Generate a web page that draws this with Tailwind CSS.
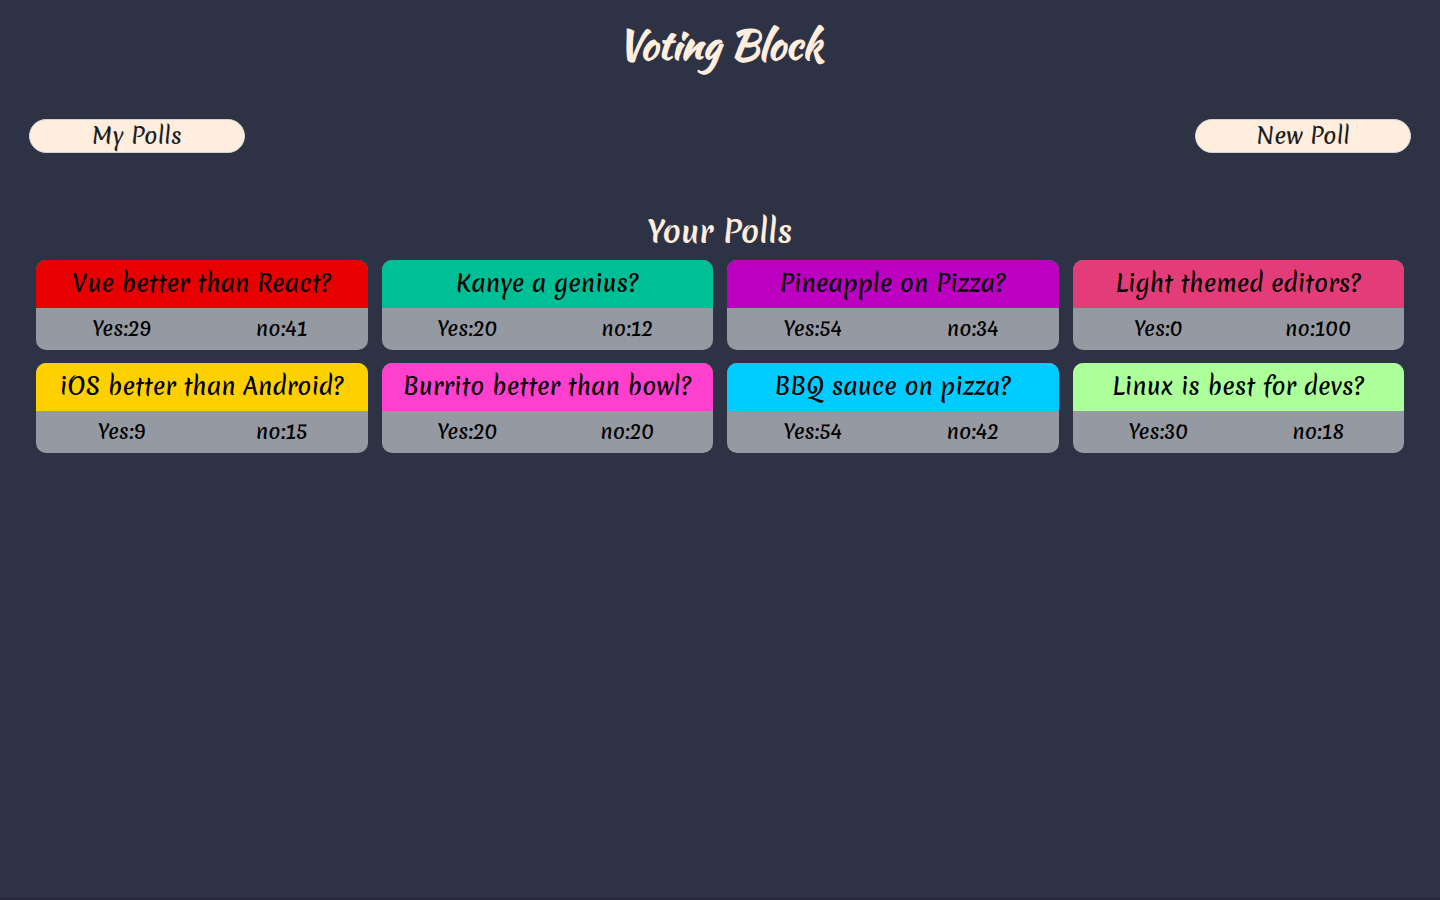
<!DOCTYPE html>
<html lang="en">
<head>
<meta charset="utf-8">
<meta name="viewport" content="width=device-width, initial-scale=1">
<title>Voting Block</title>
<script src="https://cdn.jsdelivr.net/npm/@tailwindcss/browser@4"></script>
</head>
<body class="flex min-h-screen flex-col border-b-3 border-[#2a2b41] bg-[#2d3345] font-['Merienda','Lato',sans-serif] font-medium text-black">
<header>
  <h1 class="pt-[15px] text-center font-['Kaushan_Script','Lato',sans-serif] text-[40px] leading-[60px] font-bold text-[#ffeedd]">Voting Block</h1>
  <nav class="mt-11 flex justify-between px-[29px]">
    <button type="button" class="h-[34px] w-[216px] rounded-full border border-[#d3d3d3] bg-[#ffeedd] text-[22px] leading-8 font-medium text-[#1b1e21]">My Polls</button>
    <button type="button" class="h-[34px] w-[216px] rounded-full border border-[#d3d3d3] bg-[#ffeedd] text-[22px] leading-8 font-medium text-[#1b1e21]">New Poll</button>
  </nav>
</header>
<main class="mt-[59px] px-9">
  <h2 class="text-center text-[30px] leading-[40px] font-bold text-[#ffeedd]">Your Polls</h2>
  <div class="mt-2 grid grid-cols-4 gap-x-[14px] gap-y-[13px] text-center">
    <article class="overflow-hidden rounded-[10px] bg-[#9599a2]">
      <h3 class="bg-[#e60000] text-[23px] leading-[48px] font-medium">Vue better than React?</h3>
      <div class="grid grid-cols-2 px-[6px] text-[20px] leading-[42px]"><span>Yes:29</span><span>no:41</span></div>
    </article>
    <article class="overflow-hidden rounded-[10px] bg-[#9599a2]">
      <h3 class="bg-[#00bf96] text-[23px] leading-[48px] font-medium">Kanye a genius?</h3>
      <div class="grid grid-cols-2 px-[6px] text-[20px] leading-[42px]"><span>Yes:20</span><span>no:12</span></div>
    </article>
    <article class="overflow-hidden rounded-[10px] bg-[#9599a2]">
      <h3 class="bg-[#bb00bf] text-[23px] leading-[48px] font-medium">Pineapple on Pizza?</h3>
      <div class="grid grid-cols-2 px-[6px] text-[20px] leading-[42px]"><span>Yes:54</span><span>no:34</span></div>
    </article>
    <article class="overflow-hidden rounded-[10px] bg-[#9599a2]">
      <h3 class="bg-[#e23d78] text-[23px] leading-[48px] font-medium">Light themed editors?</h3>
      <div class="grid grid-cols-2 px-[6px] text-[20px] leading-[42px]"><span>Yes:0</span><span>no:100</span></div>
    </article>
    <article class="overflow-hidden rounded-[10px] bg-[#9599a2]">
      <h3 class="bg-[#ffd000] text-[23px] leading-[48px] font-medium">iOS better than Android?</h3>
      <div class="grid grid-cols-2 px-[6px] text-[20px] leading-[42px]"><span>Yes:9</span><span>no:15</span></div>
    </article>
    <article class="overflow-hidden rounded-[10px] bg-[#9599a2]">
      <h3 class="bg-[#ff40cf] text-[23px] leading-[48px] font-medium">Burrito better than bowl?</h3>
      <div class="grid grid-cols-2 px-[6px] text-[20px] leading-[42px]"><span>Yes:20</span><span>no:20</span></div>
    </article>
    <article class="overflow-hidden rounded-[10px] bg-[#9599a2]">
      <h3 class="bg-[#00ccff] text-[23px] leading-[48px] font-medium">BBQ sauce on pizza?</h3>
      <div class="grid grid-cols-2 px-[6px] text-[20px] leading-[42px]"><span>Yes:54</span><span>no:42</span></div>
    </article>
    <article class="overflow-hidden rounded-[10px] bg-[#9599a2]">
      <h3 class="bg-[#adff99] text-[23px] leading-[48px] font-medium">Linux is best for devs?</h3>
      <div class="grid grid-cols-2 px-[6px] text-[20px] leading-[42px]"><span>Yes:30</span><span>no:18</span></div>
    </article>
  </div>
</main>
</body>
</html>
